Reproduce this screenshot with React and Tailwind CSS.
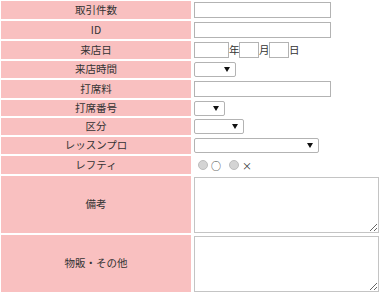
import React from "react";

const font = { fontFamily: '"Noto Sans CJK JP", "Noto Sans", sans-serif' };

function Label({ children, h }) {
  return (
    <div className={`bg-[#f9c0c0] flex items-center justify-center text-[10.5px] text-[#333] leading-none ${h}`}>
      {children}
    </div>
  );
}

function TextIn({ w }) {
  return <div className={`${w} h-[16px] border border-[#b3b3b3] bg-white`} />;
}

function Sel({ w }) {
  return (
    <div className={`${w} h-[15px] border border-[#b3b3b3] rounded-[2px] bg-white flex items-center justify-end pr-[5px]`}>
      <svg width="6" height="5" viewBox="0 0 6 5"><path d="M0 0h6L3 5z" fill="#111" /></svg>
    </div>
  );
}

function Radio() {
  return <span className="w-[10px] h-[10px] rounded-full bg-[#d4d4d4] border border-[#bdbdbd] inline-block" />;
}

function Area() {
  return (
    <textarea
      readOnly
      className="w-[185px] h-[56px] border border-[#c4c4c4] bg-white resize block outline-none"
    />
  );
}

export default function App() {
  return (
    <div className="w-[380px] h-[295px] bg-white pt-[1px] pl-[1px]" style={font}>
      <div className="grid grid-cols-[190px_1fr] gap-x-[2px] gap-y-[2px] text-[#333]">
        <Label h="h-[18px]">取引件数</Label>
        <div className="flex items-center pl-[1px]"><TextIn w="w-[137px]" /></div>

        <Label h="h-[18px]">ID</Label>
        <div className="flex items-center pl-[1px]"><TextIn w="w-[137px]" /></div>

        <Label h="h-[18px]">来店日</Label>
        <div className="flex items-center pl-[1px] text-[10.5px] leading-none">
          <TextIn w="w-[35px]" />
          <span className="w-[10px]">年</span>
          <TextIn w="w-[20px]" />
          <span className="w-[10px]">月</span>
          <TextIn w="w-[20px]" />
          <span className="w-[10px]">日</span>
        </div>

        <Label h="h-[17px]">来店時間</Label>
        <div className="flex items-center pl-[1px]"><Sel w="w-[42px]" /></div>

        <Label h="h-[18px]">打席料</Label>
        <div className="flex items-center pl-[1px]"><TextIn w="w-[137px]" /></div>

        <Label h="h-[16px]">打席番号</Label>
        <div className="flex items-center pl-[1px]"><Sel w="w-[31px]" /></div>

        <Label h="h-[17px]">区分</Label>
        <div className="flex items-center pl-[1px]"><Sel w="w-[50px]" /></div>

        <Label h="h-[17px]">レッスンプロ</Label>
        <div className="flex items-center pl-[1px]"><Sel w="w-[125px]" /></div>

        <Label h="h-[18px]">レフティ</Label>
        <div className="flex items-center pl-[5px] leading-none text-[#333]">
          <Radio />
          <span className="ml-[3px] w-[18px] text-[10px] pt-[2px]">○</span>
          <Radio />
          <span className="ml-[3px] text-[10px] pt-[1px] text-[#333]">×</span>
        </div>

        <Label h="h-[57px]">備考</Label>
        <div className="flex items-start pl-[1px] pt-[1px]"><Area /></div>

        <Label h="h-[57px]">物販・その他</Label>
        <div className="flex items-start pl-[1px] pt-[1px]"><Area /></div>
      </div>
    </div>
  );
}
